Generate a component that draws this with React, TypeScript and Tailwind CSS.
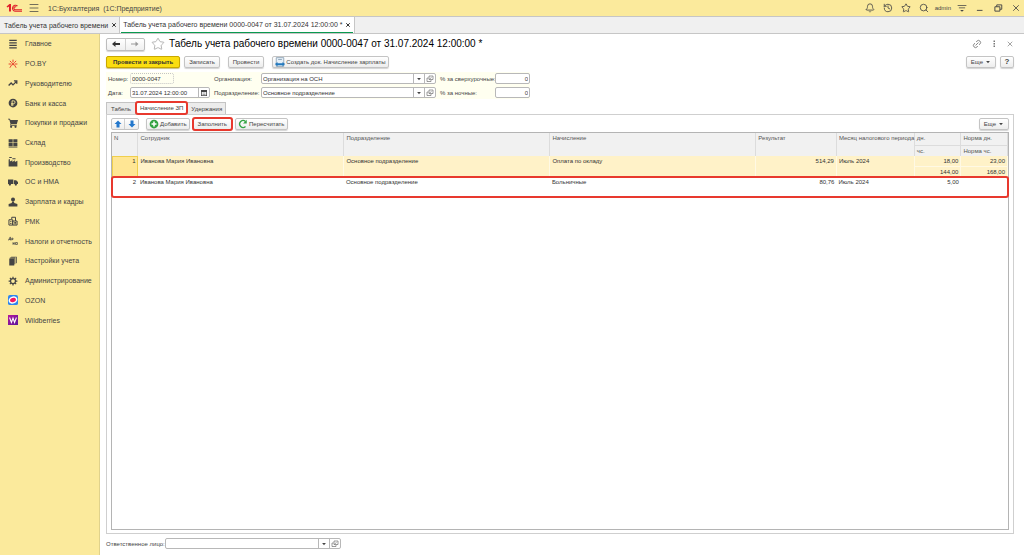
import React from "react";
import { Bell, History, Link2, Menu, Search, Star, X } from "lucide-react";

type IconProps = { children: React.ReactNode; className?: string };

const Icon: React.FC<IconProps> = ({ children, className = "size-2.5" }) => (
  <svg
    className={`shrink-0 ${className}`}
    viewBox="0 0 16 16"
    fill="currentColor"
    aria-hidden="true"
  >
    {children}
  </svg>
);

const sections = [
  {
    title: "Главное",
    icon: <path d="M2 1h12v2H2zM2 5h12v2H2zM2 9h12v2H2zM2 13h12v2H2z" />,
  },
  {
    title: "PO.BY",
    icon: (
      <g stroke="#e8432e" strokeWidth="1.6" fill="none">
        <path d="M8 1v4M1 8h4M11 8h4M3 3l3 3M13 3l-3 3M6 9l-3 5M10 9l3 5" />
        <circle cx="8" cy="8" r="1.4" fill="#e8432e" />
      </g>
    ),
  },
  {
    title: "Руководителю",
    icon: (
      <path
        d="M1 12l4-4 3 3 6-6M9.500 4.500H14V9"
        fill="none"
        stroke="currentColor"
        strokeWidth="2.200"
      />
    ),
  },
  {
    title: "Банк и касса",
    icon: (
      <>
        <circle cx="8" cy="8" r="7" />
        <path
          d="M6.500 13V4.500H9a2.200 2.200 0 0 1 0 4.500H5M5 11h4"
          fill="none"
          stroke="#fbea9c"
          strokeWidth="1.400"
        />
      </>
    ),
  },
  {
    title: "Покупки и продажи",
    icon: (
      <>
        <path d="M0 1h3l1 2h12l-2 7H5v1h9v1.500H3.500L4 9 2 2.500H0z" />
        <circle cx="5" cy="14" r="1.800" />
        <circle cx="12" cy="14" r="1.800" />
      </>
    ),
  },
  {
    title: "Склад",
    icon: (
      <path d="M1 2h6.500v5H1zM8.500 2H15v5H8.500zM1 8h6.500v5H1zM8.500 8H15v5H8.500zM1 14h14v1H1z" />
    ),
  },
  {
    title: "Производство",
    icon: (
      <path d="M1 15V4l2-1v4l4-2v3l4-3v3l4-2v9zM2 0h4v1.500H2zM7 2h5v1.500H7z" />
    ),
  },
  {
    title: "ОС и НМА",
    icon: (
      <>
        <path d="M0 4h8.500v7H0zM9.500 5H13l3 3v3H9.500z" />
        <circle cx="3" cy="12" r="1.800" />
        <circle cx="12.500" cy="12" r="1.800" />
      </>
    ),
  },
  {
    title: "Зарплата и кадры",
    icon: (
      <>
        <circle cx="8" cy="4" r="3.200" />
        <path d="M6.500 7h3l.5 2.500 5 1.500v4H1v-4l5-1.500z" />
      </>
    ),
  },
  {
    title: "РМК",
    icon: (
      <g fill="none" stroke="currentColor" strokeWidth="1.600">
        <path d="M1.500 6h6v8.500h-6zM7.500 8h7v6.500h-7zM6 5V2h6v6M3.500 9h2M3.500 12h2M10 10.500h3M10 12.500h3" />
      </g>
    ),
  },
  {
    title: "Налоги и отчетность",
    icon: (
      <g fill="none" stroke="currentColor" strokeWidth="1.200">
        <path d="M1 7l2-5h1v5M1 5.500h3M6 7V3.500h2v2H6M8 14v-4M8 12h2M10 10v4M12 10.500h3v3h-3z" />
      </g>
    ),
  },
  {
    title: "Настройки учета",
    icon: (
      <path d="M2 4h8v11H2zM3 2.500h8.500V13h-1V3.500H3zM5 1h9v10l-1.500 1V2H5z" />
    ),
  },
  {
    title: "Администрирование",
    icon: (
      <g fill="none" stroke="currentColor">
        <circle cx="8" cy="8" r="4" strokeWidth="2" />
        <path
          d="M8 1v3M8 12v3M1 8h3M12 8h3M3 3l2 2M11 11l2 2M13 3l-2 2M5 11l-2 2"
          strokeWidth="2"
        />
      </g>
    ),
  },
  {
    title: "OZON",
    icon: (
      <>
        <rect width="16" height="16" rx="3" fill="#2f86ee" />
        <ellipse
          cx="8"
          cy="8"
          rx="6"
          ry="4.500"
          fill="#f5175f"
          stroke="#fff"
          strokeWidth="2.400"
          transform="rotate(-20 8 8)"
        />
      </>
    ),
  },
  {
    title: "Wildberries",
    icon: (
      <>
        <defs>
          <linearGradient id="berry" x1="0" y1="0" x2="1" y2="1">
            <stop offset="0" stopColor="#b5179e" />
            <stop offset="1" stopColor="#5a189a" />
          </linearGradient>
        </defs>
        <rect width="16" height="16" fill="url(#berry)" />
        <path
          d="M2.500 4l3 8L8 5l2.500 7 3-8"
          fill="none"
          stroke="#fff"
          strokeWidth="1.700"
        />
      </>
    ),
  },
];

const buttonStyle =
  "flex h-3 items-center justify-center rounded-xs border border-[#c4c4c4] bg-linear-to-b from-white to-[#ededed] shadow-[0_1px_1px_#d4d4d4]";

const CaretIcon = () => (
  <Icon className="size-1.5">
    <path d="M3 5h10l-5 6z" />
  </Icon>
);

const OpenIcon = () => (
  <Icon className="size-2">
    <path
      d="M6 2h8v7H6zM5 6H2v7h8v-3M7 8l4-3"
      fill="none"
      stroke="currentColor"
      strokeWidth="1.300"
    />
  </Icon>
);

type FieldProps = { id: string; label: string; value: string };

const LookupField: React.FC<FieldProps> = ({ id, label, value }) => (
  <div className="flex h-[11px] min-w-0 rounded-xs border border-[#b8b8b8] bg-white">
    <input
      id={id}
      defaultValue={value}
      className="w-0 min-w-0 flex-1 px-px text-[#333] outline-none"
    />
    <button
      aria-label={`Выбрать: ${label}`}
      className="flex w-[11px] items-center justify-center border-l border-[#b8b8b8]"
    >
      <CaretIcon />
    </button>
    <button
      aria-label={`Открыть: ${label}`}
      className="flex w-[11px] items-center justify-center border-l border-[#b8b8b8] text-[#666]"
    >
      <OpenIcon />
    </button>
  </div>
);

const TopBar = () => (
  <header className="flex h-4 items-center bg-[#fbea9c] pr-[3px] pl-1.5 text-[#444]">
    <svg className="h-2.5 w-4" viewBox="0 0 32 20" fill="none" aria-label="1С">
      <path d="M1 7l6-5h3v15H6V7L3 9z" fill="#e0202a" />
      <path
        d="M23 6a6 6 0 1 0-4 10.500h13M20.500 8a3 3 0 1 0-2 5.500H32"
        stroke="#e0202a"
        strokeWidth="2.200"
      />
    </svg>
    <button aria-label="Меню" className="ml-1.5">
      <Menu className="size-3" strokeWidth={1.5} />
    </button>
    <span className="ml-2 text-[7px] whitespace-pre">
      1С:Бухгалтерия  (1С:Предприятие)
    </span>
    <div className="ml-auto flex items-center">
      <button aria-label="Уведомления" className="px-1">
        <Bell className="size-2.5" />
      </button>
      <button aria-label="История" className="px-1">
        <History className="size-2.5" />
      </button>
      <button aria-label="Избранное" className="px-1">
        <Star className="size-2.5" />
      </button>
      <button aria-label="Поиск" className="px-1">
        <Search className="size-2.5" />
      </button>
      <button className="px-0.5 text-[6px]">admin</button>
      <button aria-label="Настройки" className="px-1">
        <Icon>
          <path d="M1 3h14v1.500H1zM3 7h10v1.500H3zM5 11h6l-3 3z" />
        </Icon>
      </button>
      <button aria-label="Свернуть" className="px-1">
        <Icon>
          <path d="M3 11h9v1.500H3z" />
        </Icon>
      </button>
      <button aria-label="Развернуть" className="px-1">
        <Icon>
          <path
            d="M6 6V3h8v7h-3M3 6h8v7H3z"
            fill="none"
            stroke="currentColor"
            strokeWidth="1.500"
          />
        </Icon>
      </button>
      <button aria-label="Закрыть окно" className="pl-1">
        <X className="size-2.5" />
      </button>
    </div>
  </header>
);

const WindowTabs = () => (
  <div className="flex h-[18px] border-y border-[#c6c6c6] bg-[#f0f0f0] text-[7px] text-[#333]">
    <div className="flex items-center gap-[3px] border-r border-[#c6c6c6] pr-0.5 pl-1">
      <button>Табель учета рабочего времени</button>
      <button aria-label="Закрыть вкладку">
        <X className="size-1.5" strokeWidth={4} />
      </button>
    </div>
    <div className="flex border-r border-[#c6c6c6] bg-white px-px">
      <div className="flex items-center gap-0.5 border-b border-[#0a9a50] px-0.5">
        <button>
          Табель учета рабочего времени 0000-0047 от 31.07.2024 12:00:00 *
        </button>
        <button aria-label="Закрыть вкладку">
          <X className="size-1.5" strokeWidth={4} />
        </button>
      </div>
    </div>
  </div>
);

const Sidebar = () => (
  <nav className="w-[100px] shrink-0 border-r border-[#e0d28c] bg-[#fbea9c]">
    <ul className="grid h-74 auto-rows-fr">
      {sections.map((section) => (
        <li key={section.title} className="flex items-center">
          <a
            href="#"
            className="flex items-center gap-[7px] pl-2 text-[7px] text-[#444]"
          >
            <Icon>{section.icon}</Icon>
            {section.title}
          </a>
        </li>
      ))}
    </ul>
  </nav>
);

const DocumentHeader = () => (
  <div className="flex h-5 items-center">
    <div className="flex h-[13px] rounded-xs border border-[#bdbdbd] bg-linear-to-b from-white to-[#efefef] shadow-[0_1px_1px_#d4d4d4]">
      <button
        aria-label="Назад"
        className="flex w-[19px] items-center justify-center border-r border-[#d0d0d0] text-[#333]"
      >
        <Icon className="size-2">
          <path d="M7 2v4h9v4H7v4L0 8z" />
        </Icon>
      </button>
      <button
        aria-label="Вперед"
        className="flex w-[18px] items-center justify-center text-[#999]"
      >
        <Icon className="size-2">
          <path d="M9 3v4H0v2h9v4l6-5z" />
        </Icon>
      </button>
    </div>
    <button aria-label="В избранное" className="mr-1 ml-1.5 text-[#aaa]">
      <Star className="size-3.5" strokeWidth={1.5} />
    </button>
    <h1 className="text-[10px] text-black">
      Табель учета рабочего времени 0000-0047 от 31.07.2024 12:00:00 *
    </h1>
    <div className="ml-auto flex items-center gap-2 text-[#777]">
      <button aria-label="Получить ссылку">
        <Link2 className="size-2.5 -rotate-45" />
      </button>
      <button aria-label="Дополнительно">
        <Icon className="size-2">
          <path d="M7 1h3v3H7zM7 6h3v3H7zM7 11h3v3H7z" />
        </Icon>
      </button>
      <button aria-label="Закрыть">
        <X className="size-2" />
      </button>
    </div>
  </div>
);

const CommandBar = () => (
  <div className="mt-0.5 flex items-center">
    <button className="flex h-3 items-center justify-center rounded-xs border border-[#c9a800] bg-[#fbdd10] px-1.5 font-bold text-[#333] shadow-[0_1px_1px_#c9bd80]">
      Провести и закрыть
    </button>
    <button className={`${buttonStyle} ml-1 px-1`}>Записать</button>
    <button className={`${buttonStyle} ml-2 px-1`}>Провести</button>
    <button className={`${buttonStyle} ml-2 gap-px px-0.5`}>
      <Icon>
        <path d="M2 1h12v14H2z" fill="#e4eff8" />
        <path
          d="M2 1h12v14H2zM5 4h6"
          fill="none"
          stroke="#7f97ab"
          strokeWidth="1.200"
        />
        <path d="M0 11l4-3v2h8V8l4 3-4 4v-2H4v2z" fill="#2479bd" />
      </Icon>
      Создать док. Начисление зарплаты
    </button>
    <button className={`${buttonStyle} ml-auto gap-0.5 px-1`}>
      Еще <CaretIcon />
    </button>
    <button
      aria-label="Справка"
      className={`${buttonStyle} ml-1 w-3.5 text-[8px] font-bold`}
    >
      ?
    </button>
  </div>
);

const DocumentFields = () => (
  <div className="mt-1 grid w-fit grid-cols-[18px_80px_43px_175px_51px_35px] items-center gap-x-1 gap-y-[3px] bg-[#fffff0] py-px pl-0.5">
    <label htmlFor="number">Номер:</label>
    <input
      id="number"
      defaultValue="0000-0047"
      className="h-[11px] w-11 rounded-xs border border-dotted border-[#c4c4c4] px-px text-[#333]"
    />
    <label htmlFor="organization">Организация:</label>
    <LookupField
      id="organization"
      label="Организация"
      value="Организация на ОСН"
    />
    <label htmlFor="overtime" className="whitespace-nowrap">
      % за сверхурочные:
    </label>
    <input
      id="overtime"
      defaultValue="0"
      className="h-[11px] w-full rounded-xs border border-[#b8b8b8] bg-white px-px text-right"
    />

    <label htmlFor="date">Дата:</label>
    <div className="flex h-[11px] rounded-xs border border-[#b8b8b8] bg-white">
      <input
        id="date"
        defaultValue="31.07.2024 12:00:00"
        className="w-0 flex-1 px-px text-[#333] outline-none"
      />
      <button
        aria-label="Календарь"
        className="flex w-[11px] items-center justify-center border-l border-[#b8b8b8]"
      >
        <Icon className="size-2">
          <path
            d="M2 2h12v12H2zM3.500 6v6.500h9V6zM5 7.500h6v1H5zM5 10h6v1H5z"
            fillRule="evenodd"
          />
        </Icon>
      </button>
    </div>
    <label htmlFor="department">Подразделение:</label>
    <LookupField
      id="department"
      label="Подразделение"
      value="Основное подразделение"
    />
    <label htmlFor="night">% за ночные:</label>
    <input
      id="night"
      defaultValue="0"
      className="h-[11px] w-full rounded-xs border border-[#b8b8b8] bg-white px-px text-right"
    />
  </div>
);

const PageTabs = () => (
  <div role="tablist" className="mt-[3px] flex h-3">
    <button
      role="tab"
      aria-selected="false"
      className="border border-b-0 border-[#c4c4c4] bg-[#ececec] px-1"
    >
      Табель
    </button>
    <button
      role="tab"
      aria-selected="true"
      className="z-10 rounded-xs bg-white px-1 outline-2 -outline-offset-1 outline-[#e8392e]"
    >
      Начисление ЗП
    </button>
    <button
      role="tab"
      aria-selected="false"
      className="border border-b-0 border-[#c4c4c4] bg-[#ececec] px-[3px]"
    >
      Удержания
    </button>
  </div>
);

const TableToolbar = () => (
  <div className="flex items-center">
    <div className="flex h-3 rounded-xs border border-[#c4c4c4] bg-linear-to-b from-white to-[#ededed] text-[#2478cc]">
      <button
        aria-label="Переместить вверх"
        className="flex w-[13px] items-center justify-center border-r border-[#d0d0d0]"
      >
        <Icon className="size-2">
          <path d="M8 1l7 7h-4v7H5V8H1z" />
        </Icon>
      </button>
      <button
        aria-label="Переместить вниз"
        className="flex w-[13px] items-center justify-center"
      >
        <Icon className="size-2">
          <path d="M8 15l7-7h-4V1H5v7H1z" />
        </Icon>
      </button>
    </div>
    <button className={`${buttonStyle} ml-[7px] gap-px px-0.5`}>
      <Icon>
        <circle cx="8" cy="8" r="7" fill="#34a343" />
        <path d="M8 4v8M4 8h8" stroke="#fff" strokeWidth="2.500" />
      </Icon>
      Добавить
    </button>
    <button
      className={`${buttonStyle} ml-[3px] px-1 outline-2 -outline-offset-1 outline-[#e8392e]`}
    >
      Заполнить
    </button>
    <button className={`${buttonStyle} ml-[3px] gap-px px-0.5`}>
      <Icon>
        <path
          d="M12 12a5.500 5.500 0 1 1 0-8"
          fill="none"
          stroke="#34a343"
          strokeWidth="2.200"
        />
        <path d="M14 1v6H8z" fill="#34a343" />
      </Icon>
      Пересчитать
    </button>
    <button className={`${buttonStyle} ml-auto gap-0.5 px-1`}>
      Еще <CaretIcon />
    </button>
  </div>
);

const rows = [
  {
    n: 1,
    employee: "Иванова Мария Ивановна",
    department: "Основное подразделение",
    accrual: "Оплата по окладу",
    result: "514,29",
    month: "Июль 2024",
    days: "18,00",
    hours: "144,00",
    normDays: "23,00",
    normHours: "168,00",
  },
  {
    n: 2,
    employee: "Иванова Мария Ивановна",
    department: "Основное подразделение",
    accrual: "Больничные",
    result: "80,76",
    month: "Июль 2024",
    days: "5,00",
    hours: "",
    normDays: "",
    normHours: "",
  },
];

const AccrualTable = () => (
  <div className="mt-0.5 flex-1 border border-[#b4b4b4]">
    <table className="w-full table-fixed border-collapse text-left leading-[10px] text-[#333] [&_td]:px-0.5 [&_td]:py-0 [&_td]:align-top [&_th]:px-0.5 [&_th]:align-top [&_th]:font-normal">
      <colgroup>
        <col className="w-[2.9%]" />
        <col className="w-[23%]" />
        <col className="w-[23%]" />
        <col className="w-[23%]" />
        <col className="w-[9%]" />
        <col className="w-[8.7%]" />
        <col className="w-[5.2%]" />
        <col className="w-[5.2%]" />
      </colgroup>
      <thead className="bg-[#f1f1f1] text-[#555] [&_th]:border-r [&_th]:border-[#dcdcdc]">
        <tr className="h-3">
          <th rowSpan={2}>N</th>
          <th rowSpan={2}>Сотрудник</th>
          <th rowSpan={2}>Подразделение</th>
          <th rowSpan={2}>Начисление</th>
          <th rowSpan={2}>Результат</th>
          <th rowSpan={2} className="whitespace-nowrap">
            Месяц налогового периода
          </th>
          <th className="border-b">дн.</th>
          <th className="border-b">Норма дн.</th>
        </tr>
        <tr className="h-[11px]">
          <th>чс.</th>
          <th>Норма чс.</th>
        </tr>
      </thead>
      {rows.map((row) => (
        <tbody
          key={row.n}
          className={
            row.n === 1
              ? "bg-[#fff2c8] [&_td]:border-r [&_td]:border-[#fff9e4]"
              : "rounded-xs outline-2 -outline-offset-1 outline-[#e8392e]"
          }
        >
          <tr className="h-2.5">
            <td
              rowSpan={2}
              className={
                row.n === 1
                  ? "bg-[#ffe694] text-right outline-1 -outline-offset-1 outline-[#f0cf4c]"
                  : "text-right"
              }
            >
              {row.n}
            </td>
            <td rowSpan={2}>{row.employee}</td>
            <td rowSpan={2}>{row.department}</td>
            <td rowSpan={2}>{row.accrual}</td>
            <td rowSpan={2} className="text-right">
              {row.result}
            </td>
            <td rowSpan={2}>{row.month}</td>
            <td className={row.n === 1 ? "border-b text-right" : "text-right"}>
              {row.days}
            </td>
            <td className={row.n === 1 ? "border-b text-right" : "text-right"}>
              {row.normDays}
            </td>
          </tr>
          <tr className="h-2.5">
            <td className="text-right">{row.hours}</td>
            <td className="text-right">{row.normHours}</td>
          </tr>
        </tbody>
      ))}
    </table>
  </div>
);

const App: React.FC = () => {
  return (
    <div className="flex min-h-screen flex-col bg-white font-['Liberation_Sans',Arial,sans-serif] leading-none">
      <TopBar />
      <WindowTabs />

      <div className="flex flex-1">
        <Sidebar />

        <main className="flex min-w-0 flex-1 flex-col pr-2.5 pb-1.5 pl-1.5 text-[6px] text-[#444]">
          <DocumentHeader />
          <CommandBar />
          <DocumentFields />
          <PageTabs />

          {/* Accruals page */}
          <section className="flex flex-1 flex-col border border-[#cfcfcf] px-1 pt-[3px] pb-[3px]">
            <TableToolbar />
            <AccrualTable />
          </section>

          {/* Responsible person */}
          <div className="mt-1 flex items-center">
            <label htmlFor="responsible">Ответственное лицо:</label>
            <div className="w-44">
              <LookupField
                id="responsible"
                label="Ответственное лицо"
                value=""
              />
            </div>
          </div>
        </main>
      </div>
    </div>
  );
};

export default App;
